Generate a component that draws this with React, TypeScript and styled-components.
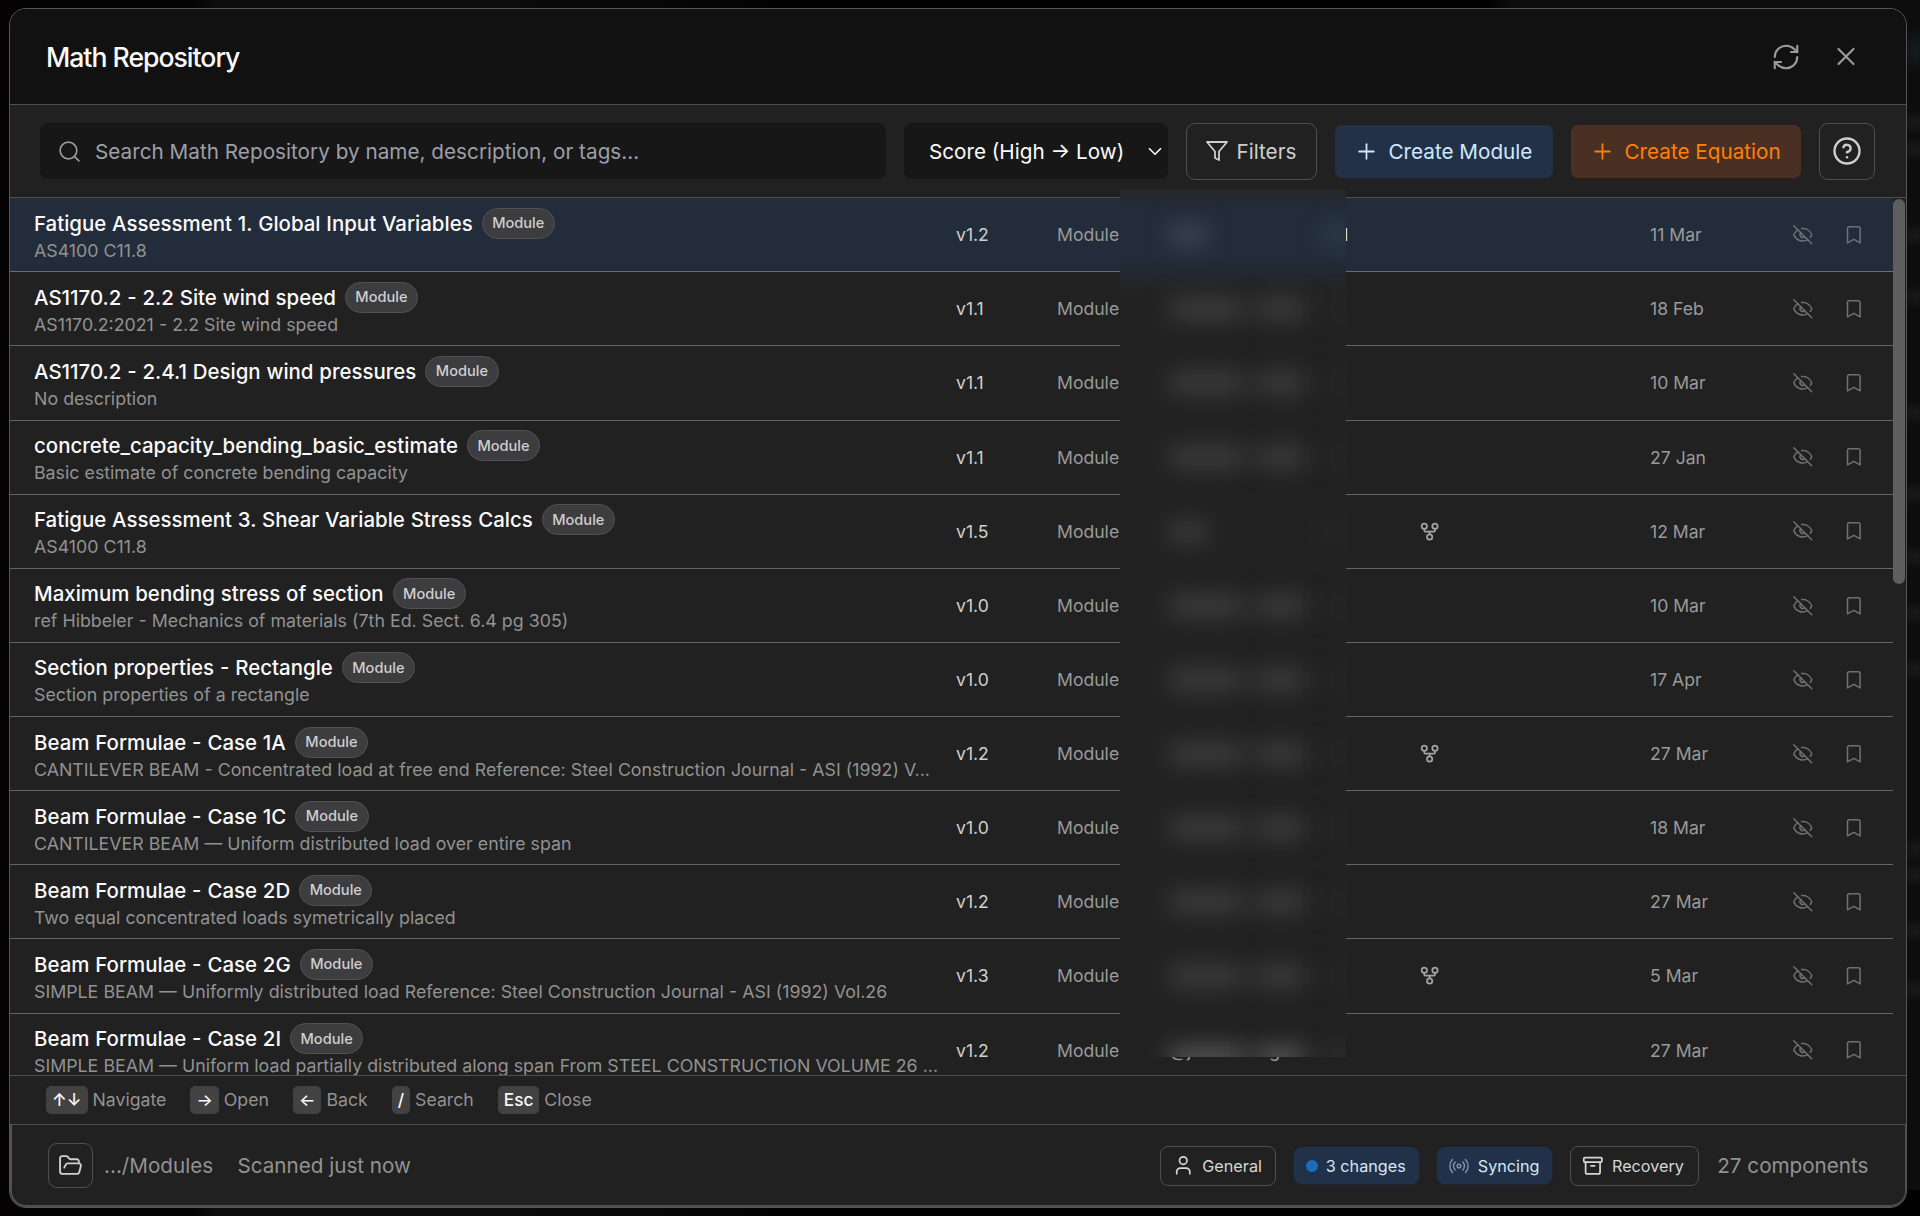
import React from "react";
import styled, { createGlobalStyle, css } from "styled-components";
import { Archive, Bookmark, EyeOff, FolderOpen, GitFork, Plus, Radio, RefreshCw, Search, User, X, CircleHelp } from "lucide-react";

const Global = createGlobalStyle`
  *, *::before, *::after { box-sizing: border-box; }
  body { margin: 0; background: #060505; overflow: hidden; }
  #root { font-family: Inter, "Liberation Sans", sans-serif; -webkit-font-smoothing: antialiased; }
  button { font: inherit; }
`;

const line = "#505050";

const glows = [122, 150, 235, 297, 413, 494, 557, 613, 669, 849, 875, 931, 990]
  .map((y) => `radial-gradient(ellipse 22px 13px at 1916px ${y}px, #191919, transparent)`)
  .join(",");

const Backdrop = styled.div`
  height: 1216px;
  padding: 8px 13px 8px 9px;
  background:
    radial-gradient(ellipse 16px 24px at 1916px 50px, #151d20, transparent),
    ${glows},
    linear-gradient(90deg, transparent 1490px, #0d0d0d 1510px) 0 0 / 100% 1190px no-repeat,
    linear-gradient(90deg, #040203 190px, #0c0c0c 215px, #0c0c0c 500px, #020202 780px, #020202);
`;

const Modal = styled.main`
  position: relative;
  height: 1200px;
  display: flex;
  flex-direction: column;
  border: 1px solid #555;
  border-radius: 17px;
  background: #212121;
  overflow: hidden;
`;

const Header = styled.header`
  height: 96px;
  flex: none;
  display: flex;
  align-items: center;
  padding: 0 45px 0 36px;
  background: #111111;
  border-bottom: 1px solid ${line};
  color: #9b9b9b;
`;

const Title = styled.h1`
  margin: 0;
  flex: 1;
  font-size: 26.6px;
  font-weight: 550;
  letter-spacing: -1px;
  color: #fafafa;
`;

const IconButton = styled.button`
  display: flex;
  align-items: center;
  justify-content: center;
  width: 30px;
  height: 30px;
  padding: 0;
  margin-left: 30px;
  border: 0;
  background: none;
  color: inherit;
`;

const Toolbar = styled.div`
  height: 93px;
  flex: none;
  display: flex;
  align-items: center;
  gap: 18px;
  padding: 0 30px;
  border-bottom: 1px solid ${line};
  font-size: 20.7px;
`;

const SearchBox = styled.label`
  width: 846.4px;
  height: 56px;
  display: flex;
  align-items: center;
  gap: 13px;
  padding-left: 17px;
  border-radius: 8px;
  background: #171717;
  color: #9b9b9b;
`;

const Placeholder = styled.span`
  color: #9c9fa8;
  white-space: nowrap;
  letter-spacing: 0.02px;
`;

const Select = styled.div`
  width: 263.2px;
  height: 56px;
  display: flex;
  align-items: center;
  justify-content: space-between;
  padding: 0 5.5px 0 24.6px;
  border-radius: 8px;
  background: #171717;
  color: #fafafa;
  white-space: nowrap;
`;

const Button = styled.button<{ $tone?: "blue" | "orange"; $w: number; $pad?: number; $gap?: number }>`
  width: ${(p) => p.$w}px;
  height: 57px;
  flex: none;
  display: flex;
  align-items: center;
  gap: ${(p) => p.$gap ?? 9}px;
  padding: 0 0 0 ${(p) => p.$pad ?? 19.5}px;
  border: 1px solid ${line};
  border-radius: 9px;
  background: none;
  color: #cfcfcf;
  white-space: nowrap;
  ${(p) => p.$tone && css`
    height: 53px;
    border: 0;
    border-radius: 7px;
    background: ${p.$tone === "blue" ? "#223148" : "#4a3022"};
    color: ${p.$tone === "blue" ? "#cdeafd" : "#ff7f0a"};
  `}
`;

const List = styled.section`
  height: 877px;
  flex: none;
  display: flex;
  overflow: hidden;
`;

const Rows = styled.div`
  width: 1883px;
  flex: none;
  padding-top: 0.15px;
`;

const Row = styled.article<{ $selected: boolean }>`
  height: 74.14px;
  display: grid;
  grid-template-columns: 922px 101px 112px 155px 63px 263px 142px 50.5px 1fr;
  align-items: center;
  padding-left: 24px;
  background: ${(p) => (p.$selected ? "#232c3a" : "none")};
  border-bottom: 1px solid ${(p) => (p.$selected ? "#666d78" : "#646464")};
  font-size: 17.6px;
  color: #9a9a9a;
`;

const Summary = styled.div`
  min-width: 0;
  padding-right: 14px;
  height: 62px;
  display: flex;
  flex-direction: column;
`;

const NameLine = styled.div`
  height: 31px;
  margin-top: 4px;
  display: flex;
  align-items: center;
  gap: 9px;
  font-size: 20.46px;
  font-weight: 500;
  word-spacing: 0.4px;
  color: #fafafa;
  white-space: nowrap;
`;

const Tag = styled.span`
  height: 31px;
  display: flex;
  align-items: center;
  padding: 0 9.5px;
  border: 1px solid #525252;
  border-radius: 16px;
  background: #3d3c3e;
  font-size: 14.6px;
  color: #cfcfcf;
`;

const Description = styled.div`
  height: 24px;
  line-height: 24px;
  font-size: 17.78px;
  word-spacing: 0.1px;
  color: #929292;
  white-space: nowrap;
  overflow: hidden;
  text-overflow: ellipsis;
`;

const Version = styled.span`
  color: #d0d0d0;
`;

const Owner = styled.span`
  padding-left: 19.7px;
  font-weight: 500;
  color: #d3f0ff;
`;

const Action = styled.span`
  display: flex;
  color: #707070;
`;

const Forked = styled.span`
  display: flex;
  padding-left: 31.5px;
  color: #a2a2a2;
`;

/* Privacy panel laid over the author columns of the list. */
const Redaction = styled.div`
  position: absolute;
  left: 1110px;
  top: 181px;
  width: 225.5px;
  height: 867px;
  padding-top: 8px;
  overflow: hidden;
  background: linear-gradient(#25282c 0, #232b36 14px, #232c3a 26px, #232c3a 66px, #23282f 84px, #232323 100px, #222222 120px);
`;

const RedactedRow = styled.div`
  height: 74.14px;
  display: flex;
  align-items: center;
  padding-left: 50px;
  gap: 12px;
`;

const Smear = styled.span<{ $w: number; $tone: string; $end?: boolean; $low?: boolean }>`
  width: ${(p) => p.$w}px;
  height: 16px;
  flex: none;
  margin-left: ${(p) => (p.$end ? "auto" : 0)};
  margin-top: ${(p) => (p.$low ? "14px" : 0)};
  background: ${(p) => p.$tone};
  filter: blur(12px);
`;

const Track = styled.div`
  width: 12px;
  padding-top: 1px;
`;

const Thumb = styled.div`
  width: 12px;
  height: 385px;
  border-radius: 6px;
  background: #5e5e5e;
`;

const Hints = styled.div`
  height: 49px;
  flex: none;
  display: flex;
  align-items: center;
  gap: 24px;
  padding: 0 0 1px 36px;
  border-top: 1px solid ${line};
  font-size: 17.7px;
  color: #929292;
`;

const Hint = styled.span`
  display: flex;
  align-items: center;
  gap: 5px;
`;

const Key = styled.kbd`
  height: 28px;
  display: flex;
  align-items: center;
  padding: 0 6px;
  border-radius: 5px;
  background: #434242;
  font: 500 17.2px Inter, sans-serif;
  color: #fafafa;
`;

const Footer = styled.footer`
  flex: 1;
  display: flex;
  align-items: center;
  padding: 1px 36.5px 0 36px;
  border: solid ${line};
  border-width: 1px 1px 2px 2px;
  border-radius: 0 0 16px 16px;
  font-size: 20.65px;
  color: #929292;
`;

const FolderButton = styled.button`
  width: 45px;
  height: 45px;
  display: flex;
  align-items: center;
  justify-content: center;
  padding: 0;
  border: 1px solid ${line};
  border-radius: 9px;
  background: none;
  color: #d0d0d0;
`;

const Path = styled.span`
  width: 133.5px;
  margin-left: 11px;
`;

const StatusGroup = styled.div`
  margin-left: auto;
  display: flex;
  align-items: center;
  gap: 18px;
`;

const Chip = styled.span<{ $w: number; $blue?: boolean; $pad: number }>`
  width: ${(p) => p.$w}px;
  height: 40px;
  display: flex;
  align-items: center;
  gap: 8px;
  padding-left: ${(p) => p.$pad}px;
  border: 1px solid ${line};
  border-radius: 8px;
  font-size: 16.2px;
  color: #d6d6d6;
  white-space: nowrap;
  ${(p) => p.$blue && css`
    height: 37px;
    border: 0;
    background: #22314a;
    box-shadow: 0 1px 3px #22314a99;
    color: #d3e8f8;
  `}
`;

const Dot = styled.i`
  width: 12px;
  height: 12px;
  border-radius: 50%;
  background: #1c6cba;
`;

const SyncIcon = styled(Radio)`
  color: #7d90a6;
`;

type Item = { name: string; desc: string; version: string; date: string; forked?: boolean; short?: boolean };

const items: Item[] = [
  { name: "Fatigue Assessment 1. Global Input Variables", desc: "AS4100 C11.8", version: "v1.2", date: "11 Mar", short: true },
  { name: "AS1170.2 - 2.2 Site wind speed", desc: "AS1170.2:2021 - 2.2 Site wind speed", version: "v1.1", date: "18 Feb" },
  { name: "AS1170.2 - 2.4.1 Design wind pressures", desc: "No description", version: "v1.1", date: "10 Mar" },
  { name: "concrete_capacity_bending_basic_estimate", desc: "Basic estimate of concrete bending capacity", version: "v1.1", date: "27 Jan" },
  { name: "Fatigue Assessment 3. Shear Variable Stress Calcs", desc: "AS4100 C11.8", version: "v1.5", date: "12 Mar", forked: true, short: true },
  { name: "Maximum bending stress of section", desc: "ref Hibbeler - Mechanics of materials (7th Ed. Sect. 6.4 pg 305)", version: "v1.0", date: "10 Mar" },
  { name: "Section properties - Rectangle", desc: "Section properties of a rectangle", version: "v1.0", date: "17 Apr" },
  { name: "Beam Formulae - Case 1A", desc: "CANTILEVER BEAM - Concentrated load at free end Reference: Steel Construction Journal - ASI (1992) V...", version: "v1.2", date: "27 Mar", forked: true },
  { name: "Beam Formulae - Case 1C", desc: "CANTILEVER BEAM — Uniform distributed load over entire span", version: "v1.0", date: "18 Mar" },
  { name: "Beam Formulae - Case 2D", desc: "Two equal concentrated loads symetrically placed", version: "v1.2", date: "27 Mar" },
  { name: "Beam Formulae - Case 2G", desc: "SIMPLE BEAM — Uniformly distributed load Reference: Steel Construction Journal - ASI (1992) Vol.26", version: "v1.3", date: "5 Mar", forked: true },
  { name: "Beam Formulae - Case 2I", desc: "SIMPLE BEAM — Uniform load partially distributed along span From STEEL CONSTRUCTION VOLUME 26 ...", version: "v1.2", date: "27 Mar" },
];

const hints = [["↑↓", "Navigate"], ["→", "Open"], ["←", "Back"], ["/", "Search"], ["Esc", "Close"]];

const FunnelIcon = () => (
  <svg width="24" height="24" viewBox="0 0 24 24" fill="none" stroke="currentColor" strokeWidth="1.8" strokeLinejoin="round">
    <polygon points="22 3 2 3 10 12.46 10 19 14 21 14 12.46 22 3" />
  </svg>
);

const Chevron = () => (
  <svg width="14" height="9" viewBox="0 0 14 9" fill="none" stroke="currentColor" strokeWidth="1.6">
    <path d="M1 1.2 7 7.2 13 1.2" />
  </svg>
);

const Author = styled.span<{ $before: number }>`
  margin-left: ${(p) => p.$before}px;
`;

function ListRow({ item, selected, last }: { item: Item; selected: boolean; last: boolean }) {
  return (
    <Row $selected={selected}>
      <Summary>
        <NameLine>{item.name}<Tag>Module</Tag></NameLine>
        <Description>{item.desc}</Description>
      </Summary>
      <Version>{item.version}</Version>
      <span>Module</span>
      <span>
        {last && <><Author $before={1}>@j</Author><Author $before={78}>g</Author></>}
      </span>
      <Owner>{selected && "l"}</Owner>
      <Forked>{item.forked && <GitFork size={21.3} strokeWidth={2} />}</Forked>
      <span>{item.date}</span>
      <Action><EyeOff size={21.5} strokeWidth={1.7} /></Action>
      <Action><Bookmark size={21.6} strokeWidth={1.7} /></Action>
    </Row>
  );
}

function RedactedCells({ item, selected, last }: { item: Item; selected: boolean; last: boolean }) {
  const tone = selected ? "#48545c" : last ? "#686868" : "#474747";
  return (
    <RedactedRow>
      {item.short
        ? <Smear $w={36} $tone={tone} />
        : <><Smear $w={74} $tone={tone} $low={last} /><Smear $w={48} $tone={tone} $low={last} /></>}
      <Smear $w={18} $tone={selected ? "#3a4e60" : last ? "#3a3a3a" : "#2b2b2b"} $low={last} $end />
    </RedactedRow>
  );
}

export default function App() {
  const lastIndex = items.length - 1;
  return (
    <>
      <Global />
      <Backdrop>
        <Modal>
          <Header>
            <Title>Math Repository</Title>
            <IconButton aria-label="Refresh"><RefreshCw size={30} strokeWidth={1.7} /></IconButton>
            <IconButton aria-label="Close"><X size={31} strokeWidth={1.7} /></IconButton>
          </Header>
          <Toolbar>
            <SearchBox>
              <Search size={25} strokeWidth={1.6} />
              <Placeholder>Search Math Repository by name, description, or tags...</Placeholder>
            </SearchBox>
            <Select>Score (High → Low)<Chevron /></Select>
            <Button $w={131.4} $gap={7.5} $pad={18.4}><FunnelIcon />Filters</Button>
            <Button $w={218} $tone="blue"><Plus size={25} strokeWidth={1.7} />Create Module</Button>
            <Button $w={230} $tone="orange"><Plus size={25} strokeWidth={1.7} />Create Equation</Button>
            <Button $w={56} $pad={12}><CircleHelp size={30} strokeWidth={1.9} /></Button>
          </Toolbar>
          <List>
            <Rows>
              {items.map((item, i) => (
                <ListRow key={item.name} item={item} selected={i === 0} last={i === lastIndex} />
              ))}
            </Rows>
            <Track><Thumb /></Track>
          </List>
          <Redaction>
            {items.map((item, i) => (
              <RedactedCells key={item.name} item={item} selected={i === 0} last={i === lastIndex} />
            ))}
          </Redaction>
          <Hints>
            {hints.map(([key, label]) => <Hint key={label}><Key>{key}</Key>{label}</Hint>)}
          </Hints>
          <Footer>
            <FolderButton aria-label="Open folder"><FolderOpen size={25} strokeWidth={1.8} /></FolderButton>
            <Path>.../Modules</Path>
            <span>Scanned just now</span>
            <StatusGroup>
              <Chip $w={116} $pad={11}><User size={22.5} strokeWidth={1.8} />General</Chip>
              <Chip $w={125} $pad={12} $blue><Dot />3 changes</Chip>
              <Chip $w={115.5} $pad={11} $blue><SyncIcon size={22} strokeWidth={1.6} />Syncing</Chip>
              <Chip $w={129} $pad={11}><Archive size={21.7} strokeWidth={1.9} />Recovery</Chip>
              <span>27 components</span>
            </StatusGroup>
          </Footer>
        </Modal>
      </Backdrop>
    </>
  );
}
